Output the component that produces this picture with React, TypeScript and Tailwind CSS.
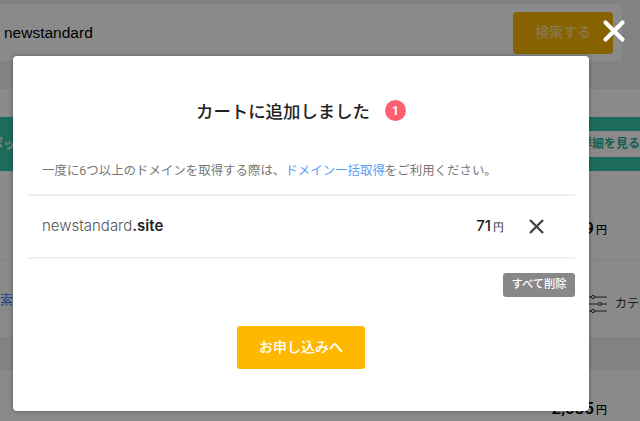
export default function App() {
  const jp = "font-['Roboto','Noto_Sans_CJK_JP',sans-serif]";
  return (
    <div className={`relative h-[421px] w-[640px] overflow-hidden bg-white ${jp}`}>
      {/* Page underneath */}
      <div className="flex h-full flex-col">
        <div className="h-[90px] bg-[#f0f0f0] pt-[4px]">
          <div className="flex h-[57px] w-[622px] items-center justify-between rounded-r bg-white pl-[4px] pr-[9px]">
            <span className="font-['Liberation_Sans',sans-serif] text-[15.5px] text-black">newstandard</span>
            <div className="flex h-[42px] w-[100px] items-center justify-center rounded bg-[#f9b600] text-[14px] font-medium text-[#ffffff]/60">検索する</div>
          </div>
        </div>
        <div className="h-[28px] bg-white" />
        <div className="flex h-[54px] items-center justify-between overflow-hidden bg-[#36c6a6]">
          <span className="-ml-[10px] text-[13px] font-medium text-white">ポッ</span>
          <div className="flex h-[26px] w-[230px] items-center justify-end overflow-hidden bg-white">
            <span className="whitespace-nowrap text-[12px] font-bold text-[#27b396]">詳細を見る</span>
          </div>
        </div>
        <div className="flex h-[90px] items-center justify-end border-b border-[#eeeeee] bg-white pr-[33px]">
          <span className="mt-[28px] text-[17px] font-medium text-black">9<span className="ml-[2px] text-[11px]">円</span></span>
        </div>
        <div className="flex h-[78px] items-center justify-between bg-white pt-[10px]">
          <span className="-ml-[13px] -mt-[8px] text-[13px] font-medium text-[#5490ff]">検索</span>
          <div className="flex items-center gap-[8px] whitespace-nowrap">
            <svg width="18" height="20" viewBox="0 0 18 20" fill="none" stroke="#333" strokeWidth="1">
              <path d="M0 3h2M6 3h12M0 10h9M13 10h5M0 17h2M6 17h12" />
              <circle cx="4" cy="3" r="1.6" />
              <circle cx="11" cy="10" r="1.6" />
              <circle cx="4" cy="17" r="1.6" />
            </svg>
            <span className="w-[25px] overflow-hidden text-[12px] text-[#333]">カテゴリ</span>
          </div>
        </div>
        <div className="h-[33px] bg-[#f0f0f0]" />
        <div className="flex flex-1 justify-end bg-white pr-[33px] pt-[28px]">
          <span className="text-[17px] font-medium leading-[20px] text-black">2,035<span className="ml-[2px] text-[11px]">円</span></span>
        </div>
      </div>

      {/* Overlay */}
      <div className="absolute inset-0 bg-[rgba(0,0,0,0.46)]" />

      {/* Close */}
      <svg className="absolute left-[602px] top-[19px]" width="24" height="24" viewBox="0 0 24 24" fill="none" stroke="#fff" strokeWidth="4.2" strokeLinecap="round">
        <path d="M3.5 3.5l17 17M20.5 3.5l-17 17" />
      </svg>

      {/* Modal */}
      <div className="absolute left-[13px] top-[56px] flex h-[355px] w-[576px] flex-col rounded-[4px] bg-white pl-[15px] pr-[14px] shadow-[0_0_4px_rgba(0,0,0,0.35)]">
        <div className="flex h-[66px] items-end justify-center gap-[15px] pr-[1px]">
          <h2 className="text-[17.4px] font-medium leading-[20px] text-[#222222]">カートに追加しました</h2>
          <span className="mb-[1px] flex h-[21px] w-[21px] items-center justify-center rounded-full bg-[#fb5f70] text-[12px] font-bold leading-none text-white">1</span>
        </div>
        <p className="mt-[39px] h-[20px] whitespace-nowrap pl-[14px] text-[12.45px] leading-[20px] text-[#777777]">
          一度に6つ以上のドメインを取得する際は、<span className="text-[#5b9bf8]">ドメイン一括取得</span>をご利用ください。
        </p>
        <div className="mt-[13px] flex h-[65px] items-center justify-between border-y-2 border-[#f0f0f0] pl-[14px] pr-[31px]">
          <span className="font-['Inter',sans-serif] text-[15px] font-light text-[#555555]">
            newstandard<span className="font-semibold text-[#222222]">.site</span>
          </span>
          <div className="flex items-center gap-[25px]">
            <span className="font-['Inter',sans-serif] text-[15px] font-medium text-[#222222]">71<span className="ml-[2px] text-[11px]">円</span></span>
            <svg width="15" height="15" viewBox="0 0 15 15" fill="none" stroke="#444" strokeWidth="2.4">
              <path d="M1 1l13 13M14 1L1 14" />
            </svg>
          </div>
        </div>
        <div className="mt-[14px] flex justify-end">
          <button className="flex h-[24px] w-[72px] items-center justify-center rounded-[3px] bg-[#888888] text-[11.3px] font-medium text-white">すべて削除</button>
        </div>
        <div className="mt-[29px] flex justify-center pr-[1px]">
          <button className="flex h-[43px] w-[128px] items-center justify-center rounded-[3px] bg-[#feb800] text-[14px] font-medium text-white">お申し込みへ</button>
        </div>
      </div>
    </div>
  );
}
